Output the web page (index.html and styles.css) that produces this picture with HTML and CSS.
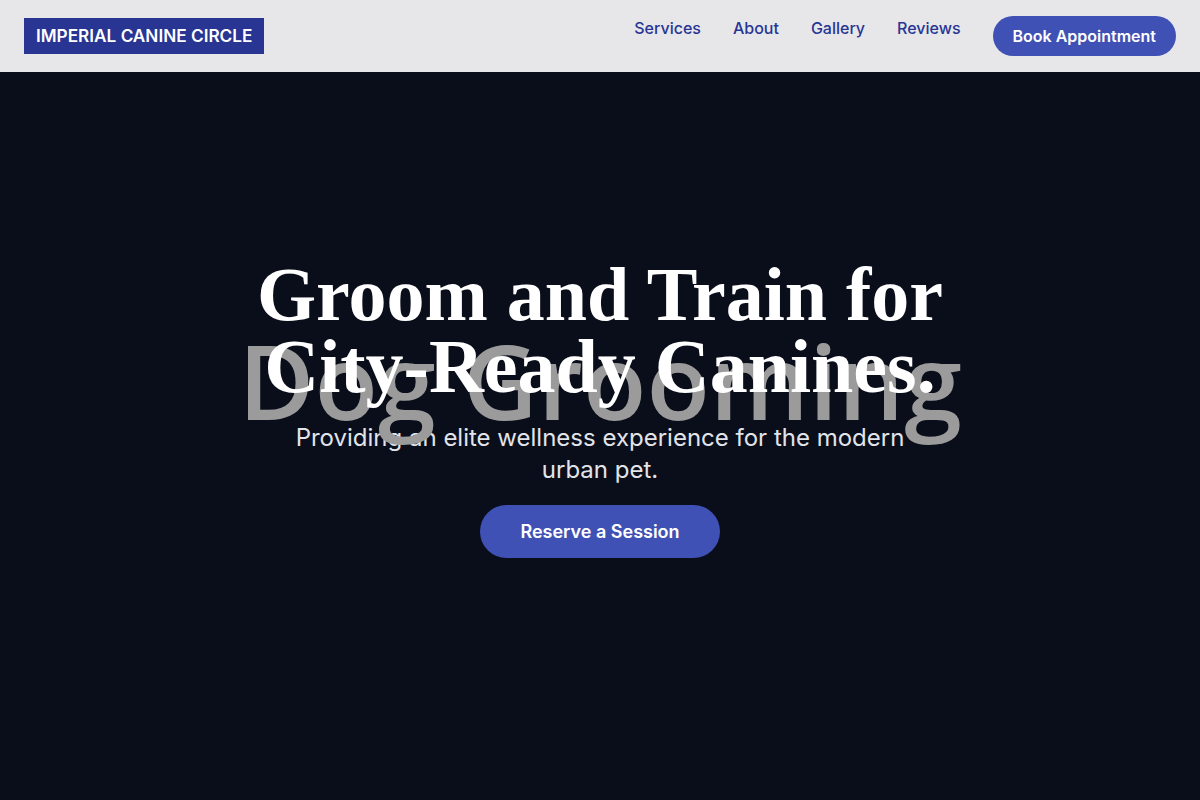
FILE: index.html
```html
<!DOCTYPE html>
<html lang="en">
<head>
<meta charset="utf-8">
<title>Imperial Canine Circle</title>
<link rel="stylesheet" href="styles.css">
</head>
<body>
<header class="site-header">
  <a class="logo" href="#">IMPERIAL CANINE CIRCLE</a>
  <nav class="nav">
    <a class="nav-link" href="#">Services</a>
    <a class="nav-link" href="#">About</a>
    <a class="nav-link" href="#">Gallery</a>
    <a class="nav-link" href="#">Reviews</a>
    <a class="nav-btn" href="#">Book Appointment</a>
  </nav>
</header>
<main class="hero">
  <div class="hero-bg">Dog Grooming</div>
  <h1 class="hero-title">Groom and Train for City-Ready Canines.</h1>
  <p class="hero-sub">Providing an elite wellness experience for the modern urban pet.</p>
  <a class="hero-btn" href="#">Reserve a Session</a>
</main>
</body>
</html>
```
FILE: styles.css
```css
* { box-sizing: border-box; }
html, body { margin: 0; padding: 0; }
body {
  font-family: Inter, "Noto Sans", sans-serif;
  background: #0a0e1a;
  height: 800px;
  overflow: hidden;
}
a { text-decoration: none; }
.site-header {
  height: 72px;
  background: #e7e7ea;
  display: flex;
  align-items: center;
  justify-content: space-between;
  padding: 0 24px;
}
.logo {
  background: #283593;
  color: #fff;
  font-weight: 600;
  font-size: 17.2px;
  line-height: 24px;
  padding: 6px 12px;
}
.nav {
  display: flex;
  align-items: flex-start;
  gap: 32px;
}
.nav-link {
  color: #283593;
  font-size: 16px;
  font-weight: 500;
  line-height: 24px;
}
.nav-btn {
  background: #3f51b5;
  color: #fff;
  font-size: 16px;
  font-weight: 600;
  line-height: 24px;
  padding: 8px 20px;
  border-radius: 20px;
}
.hero {
  position: relative;
  height: 728px;
  background: #0a0e1a;
  display: flex;
  flex-direction: column;
  align-items: center;
  padding-top: 186px;
  text-align: center;
}
.hero-bg {
  position: absolute;
  left: 0;
  right: 0;
  top: 256px;
  font-family: "Open Sans", "Noto Sans", sans-serif;
  font-size: 104px;
  font-weight: 600;
  line-height: 1;
  color: #9b9b9b;
  z-index: 1;
  white-space: nowrap;
}
.hero-title {
  position: relative;
  z-index: 2;
  margin: 0;
  width: 760px;
  font-family: "Liberation Serif", "Times New Roman", serif;
  font-weight: 700;
  font-size: 76px;
  line-height: 72px;
  color: #fff;
}
.hero-sub {
  margin: 20px 0 0;
  width: 620px;
  font-size: 24px;
  line-height: 32px;
  color: #e2e4ea;
}
.hero-btn {
  position: relative;
  z-index: 2;
  margin-top: 19px;
  background: #3f51b5;
  color: #fff;
  font-size: 18px;
  font-weight: 600;
  line-height: 21px;
  padding: 16px 40px;
  border-radius: 27px;
}
```
